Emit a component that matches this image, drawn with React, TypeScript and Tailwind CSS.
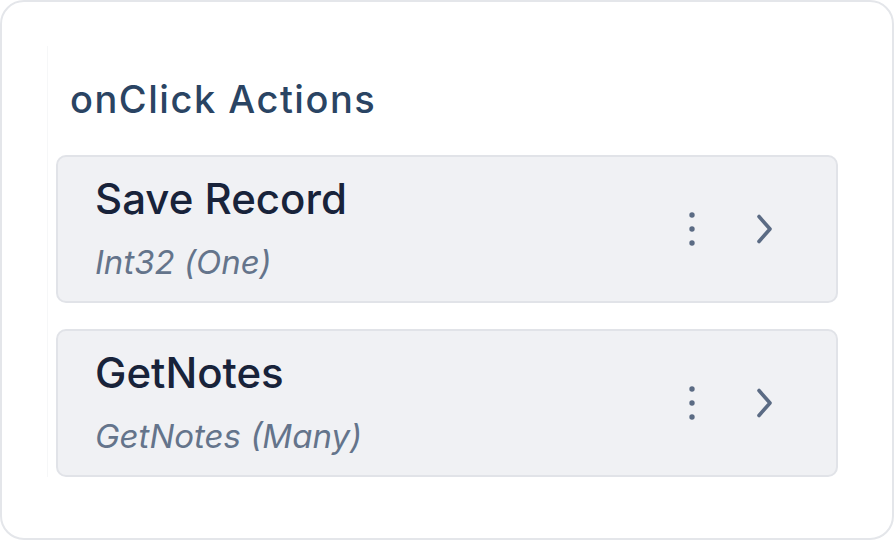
const font = "font-['Inter','Noto_Sans',sans-serif]";

function DotsIcon() {
  return (
    <svg width="10" height="34" viewBox="0 0 10 34" className="text-[#5b6b84]">
      <circle cx="5" cy="3" r="2.7" fill="currentColor" />
      <circle cx="5" cy="17" r="2.7" fill="currentColor" />
      <circle cx="5" cy="31" r="2.7" fill="currentColor" />
    </svg>
  );
}

function ChevronIcon() {
  return (
    <svg width="20" height="34" viewBox="0 0 20 34" fill="none" className="text-[#5b6b84]">
      <path d="M5 4.5 L16 17 L5 29.5" stroke="currentColor" strokeWidth="3.6" strokeLinecap="round" strokeLinejoin="round" />
    </svg>
  );
}

function ActionCard({ title, detail }: { title: string; detail: string }) {
  return (
    <div className="flex h-[148px] rounded-[10px] border-2 border-[#e1e3e8] bg-[#f0f1f4] pl-[37px] pr-[62px]">
      <div className="flex-1 pt-[21px]">
        <p className="text-[42px] font-medium leading-none text-[#18233a]">{title}</p>
        <p className="mt-[26px] text-[33px] italic leading-none text-[#64748b]">{detail}</p>
      </div>
      <div className="flex items-center gap-[57px]">
        <DotsIcon />
        <ChevronIcon />
      </div>
    </div>
  );
}

export default function App() {
  return (
    <div className={`${font} h-[540px] w-[894px] bg-white`}>
      <div className="h-full w-full rounded-[24px] border-2 border-[#e4e6ea] bg-white pt-[44px]">
        <div className="ml-[45px] mr-[54px] border-l border-[#f6f7f8] pt-[34px]">
          <h2 className="pl-[22px] text-[38px] font-medium leading-none tracking-[0.04em] text-[#2a4463]">
            onClick Actions
          </h2>
          <div className="mt-[37px] flex flex-col gap-[26px] pl-[8px]">
            <ActionCard title="Save Record" detail="Int32 (One)" />
            <ActionCard title="GetNotes" detail="GetNotes (Many)" />
          </div>
        </div>
      </div>
    </div>
  );
}
